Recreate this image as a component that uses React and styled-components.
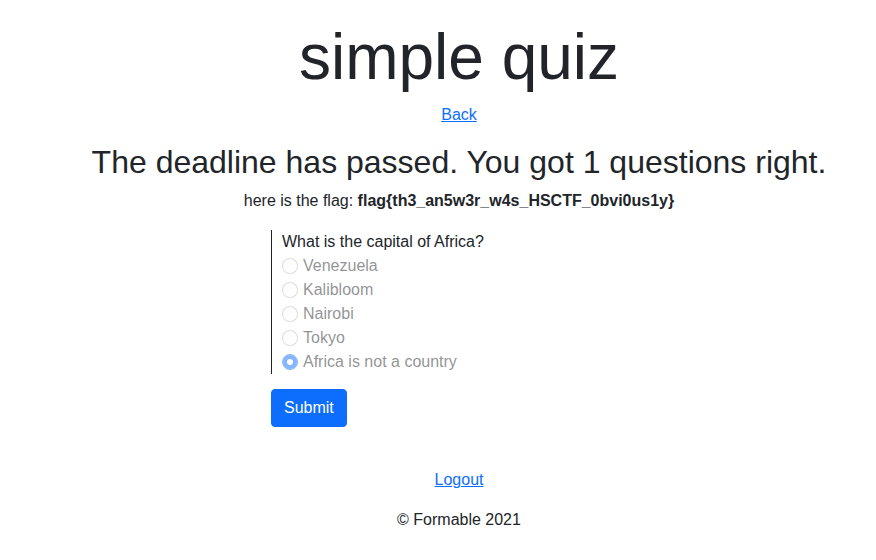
import styled, { createGlobalStyle } from 'styled-components'

const GlobalStyle = createGlobalStyle`
  body {
    margin: 0;
    font-family: "Liberation Sans", Arial, sans-serif;
    font-size: 16px;
    line-height: 1.5;
    color: #212529;
    background: #fff;
  }
`

const options = ['Venezuela', 'Kalibloom', 'Nairobi', 'Tokyo', 'Africa is not a country']

function App() {
  return (
    <>
      <GlobalStyle />
      <Page>
        <Title>simple quiz</Title>
        <NavLink href="#">Back</NavLink>
        <Result>The deadline has passed. You got 1 questions right.</Result>
        <Flag>
          here is the flag: <b>flag{'{'}th3_an5w3r_w4s_HSCTF_0bvi0us1y{'}'}</b>
        </Flag>
        <QuizColumn>
          <Question>
            <Prompt>What is the capital of Africa?</Prompt>
            {options.map((opt, i) => (
              <Option key={opt}>
                <Radio
                  type="radio"
                  name="q1"
                  disabled
                  defaultChecked={i === options.length - 1}
                />
                {opt}
              </Option>
            ))}
          </Question>
          <SubmitButton type="button">Submit</SubmitButton>
        </QuizColumn>
        <LogoutLink href="#">Logout</LogoutLink>
        <Footer>© Formable 2021</Footer>
      </Page>
    </>
  )
}

export default App

const Page = styled.div`
  display: flex;
  flex-direction: column;
  align-items: center;
  text-align: center;
  padding: 19px 0 0 42px;
`

const Title = styled.h1`
  margin: 0 0 7px;
  font-size: 64px;
  font-weight: 400;
  line-height: 1.2;
`

const NavLink = styled.a`
  color: #0d6efd;
  text-decoration: underline;
`

const Result = styled.h2`
  margin: 16px 0 8px;
  font-size: 32px;
  font-weight: 400;
  line-height: 1.2;
`

const Flag = styled.p`
  margin: 0 0 17px;
  b {
    font-weight: 700;
  }
`

const QuizColumn = styled.div`
  width: 376px;
  text-align: left;
  display: flex;
  flex-direction: column;
  align-items: flex-start;
`

const Question = styled.div`
  align-self: stretch;
  border-left: 1px solid #212529;
  padding-left: 10px;
  margin-bottom: 15px;
`

const Prompt = styled.div``

const Option = styled.label`
  display: flex;
  align-items: center;
  gap: 5px;
  color: rgba(33, 37, 41, 0.5);
`

const Radio = styled.input`
  appearance: none;
  margin: 0;
  width: 16px;
  height: 16px;
  border-radius: 50%;
  border: 1px solid rgba(0, 0, 0, 0.25);
  background: #fff;
  opacity: 0.5;
  &:checked {
    background: #0d6efd;
    border-color: #0d6efd;
    box-shadow: inset 0 0 0 4px #0d6efd, inset 0 0 0 8px #fff;
  }
`

const SubmitButton = styled.button`
  font-family: inherit;
  font-size: 16px;
  line-height: 1.5;
  padding: 6px 12px;
  color: #fff;
  background: #0d6efd;
  border: 1px solid #0d6efd;
  border-radius: 4px;
`

const LogoutLink = styled(NavLink)`
  margin-top: 41px;
`

const Footer = styled.footer`
  margin-top: 16px;
`
